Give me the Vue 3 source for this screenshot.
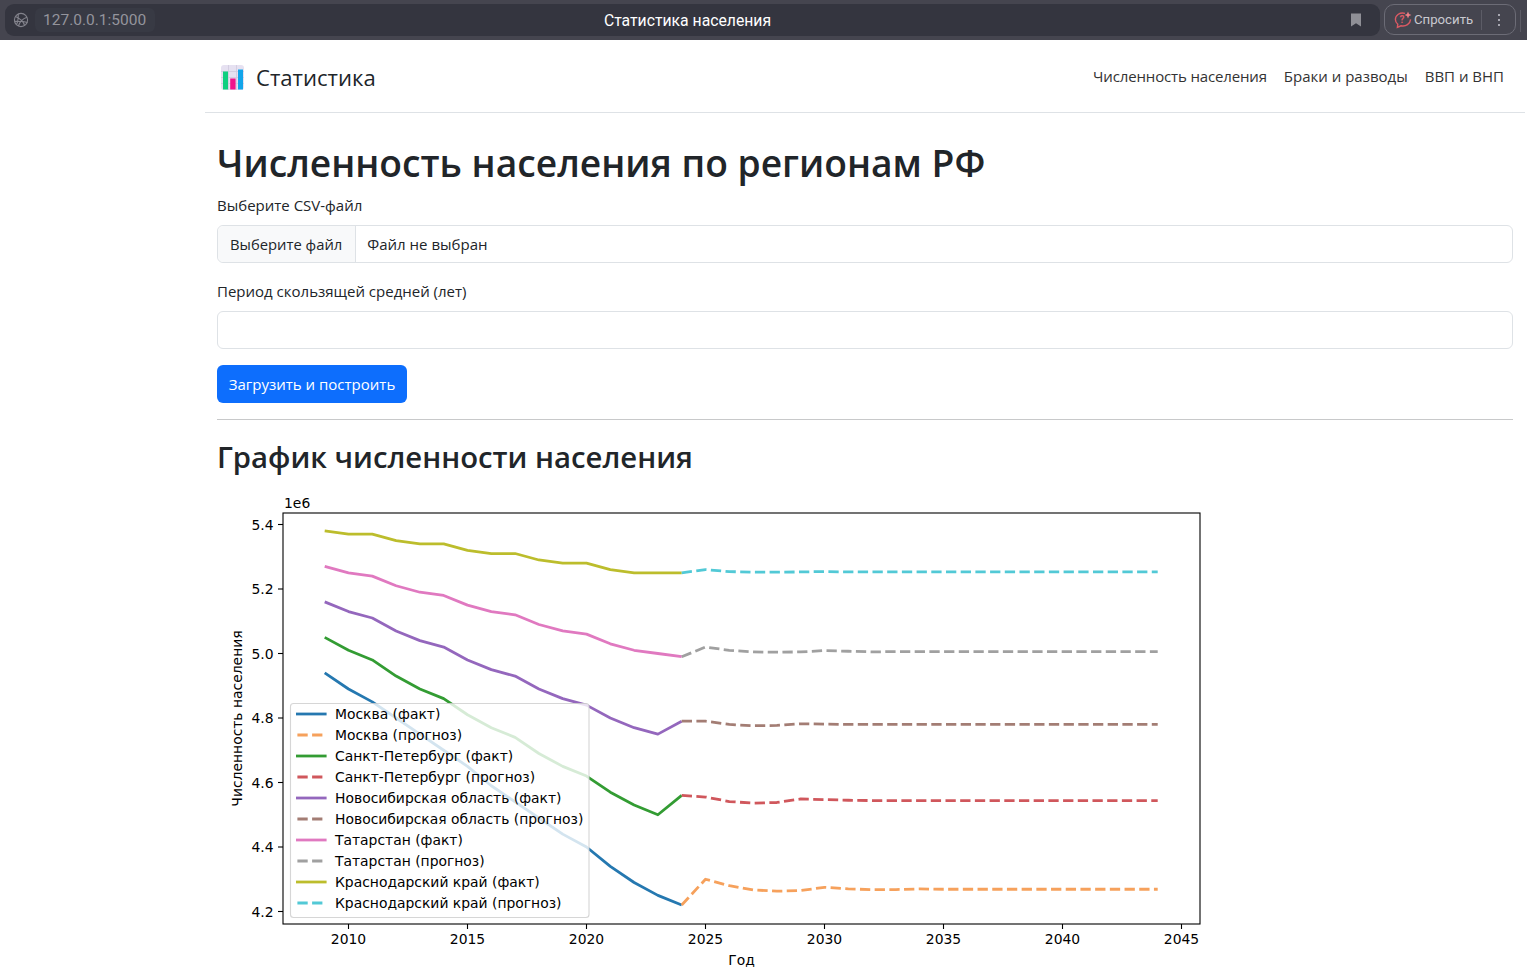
<template>
  <div class="browser-bar">
    <div class="address">
      <svg class="globe" width="16" height="16" viewBox="0 0 16 16" fill="none" stroke="#83838c" stroke-width="1.1">
        <circle cx="8" cy="8" r="6.6" />
        <path d="M2.5 4.6 C6 6.2 10.5 9.6 11.6 13.6 M5.2 2 C5.4 6 4.6 10.6 3.4 12.8 M14 5.2 C10.5 6.4 6.6 10 5.4 14 M1.6 9.4 C5.4 9.2 10.8 9.4 14.4 10.6" />
      </svg>
      <span class="url">127.0.0.1:5000</span>
      <span class="tab-title">Статистика населения</span>
      <svg class="bookmark" width="12" height="14" viewBox="0 0 12 14"><path d="M1 0.5 H11 V13.5 L6 10.2 L1 13.5 Z" fill="#8f8f96" /></svg>
    </div>
    <div class="ask">
      <svg class="ask-icon" width="18" height="18" viewBox="0 0 18 18" fill="none">
        <path d="M11 2.4 C6 1 1.4 4 1.4 8.6 C1.4 10.6 2.4 12.2 3.8 13.2 L3.4 16.4 L7 14.8 C11.8 15.8 16.2 13 16.6 8.4" stroke="#dc5a64" stroke-width="1.4" />
        <text x="5.4" y="12" class="ask-q">?</text>
        <path d="M14 0.6 L15 3 L17.4 4 L15 5 L14 7.4 L13 5 L10.6 4 L13 3 Z" fill="#f07f86" />
      </svg>
      <span class="ask-label">Спросить</span>
      <i class="ask-sep"></i>
      <span class="dots"><i></i><i></i><i></i></span>
    </div>
    <i class="bar-sep"></i>
  </div>

  <div class="page">
    <nav class="navbar">
      <a class="brand">
        <svg width="25" height="26" viewBox="0 0 25 26">
          <rect x="1" y="0" width="23" height="25" rx="3" fill="#e6e1f1" />
          <path d="M1 6.5 H24 M1 12.5 H24 M1 18.5 H24 M8.5 0 V25 M16.5 0 V25" stroke="#cfc9de" stroke-width="0.8" />
          <rect x="3" y="6.5" width="5" height="18" fill="#0ecf80" />
          <rect x="10.2" y="13.5" width="5.4" height="11" fill="#f0148c" />
          <rect x="18" y="4.5" width="5" height="20" fill="#12a5ea" />
        </svg>
        <span class="brand-name">Статистика</span>
      </a>
      <div class="nav-links">
        <a class="tight">Численность населения</a>
        <a>Браки и разводы</a>
        <a>ВВП и ВНП</a>
      </div>
    </nav>

    <main class="content">
      <h1>Численность населения по регионам РФ</h1>
      <label class="form-label">Выберите CSV-файл</label>
      <div class="file-input">
        <span class="file-btn">Выберите файл</span>
        <span class="file-name">Файл не выбран</span>
      </div>
      <label class="form-label second">Период скользящей средней (лет)</label>
      <div class="text-input"></div>
      <button class="submit">Загрузить и построить</button>
      <hr />
      <h2>График численности населения</h2>

      <svg class="chart" width="1000" height="483" viewBox="0 0 1000 483">
        <g v-for="s in series" :key="s.name">
          <polyline :points="s.factPts" fill="none" :stroke="s.fact" stroke-width="2.78" stroke-linejoin="round" />
          <polyline :points="s.forePts" fill="none" :stroke="s.fore" stroke-width="2.78" stroke-dasharray="10.3 4.4" stroke-linejoin="round" />
        </g>

        <rect :x="plot.l" :y="plot.t" :width="plot.r - plot.l" :height="plot.b - plot.t" fill="none" stroke="#000" stroke-width="1.1" />

        <g v-for="t in xTicks" :key="t.label">
          <line :x1="t.x" :x2="t.x" :y1="plot.b" :y2="plot.b + 5" stroke="#000" stroke-width="1.1" />
          <text :x="t.x" :y="plot.b + 20" text-anchor="middle" class="tick">{{ t.label }}</text>
        </g>
        <g v-for="t in yTicks" :key="t.label">
          <line :x1="plot.l - 5" :x2="plot.l" :y1="t.y" :y2="t.y" stroke="#000" stroke-width="1.1" />
          <text :x="plot.l - 9.5" :y="t.y + 5" text-anchor="end" class="tick">{{ t.label }}</text>
        </g>
        <text x="67" y="13" class="tick">1e6</text>
        <text x="524.5" y="470" text-anchor="middle" class="tick">Год</text>
        <text transform="translate(25 223.5) rotate(-90)" text-anchor="middle" class="tick">Численность населения</text>

        <rect x="73.5" y="208.5" width="298.5" height="214" rx="3" fill="#fff" fill-opacity="0.8" stroke="#ccc" stroke-opacity="0.8" stroke-width="1.1" />
        <g v-for="(row, i) in legend" :key="row.label">
          <line v-if="row.solid" x1="80.4" x2="108.2" :y1="219 + i * 21" :y2="219 + i * 21" :stroke="row.color" stroke-width="2.78" stroke-linecap="square" />
          <line v-else x1="80.4" x2="108.2" :y1="219 + i * 21" :y2="219 + i * 21" :stroke="row.color" stroke-width="2.78" stroke-dasharray="10.3 4.4" />
          <text x="118" :y="224 + i * 21" class="tick">{{ row.label }}</text>
        </g>
      </svg>
    </main>
  </div>
</template>

<script setup>
const plot = { l: 66, r: 983, t: 18, b: 429 }

const px = (year) => 131.5 + (year - 2010) * 23.8
const py = (v) => 29.5 + (5.4 - v) * 322.5

function fill(values, last) {
  const out = [...values]
  while (out.length < 21) out.push(last)
  return out
}

const raw = [
  {
    name: 'Москва', fact: '#2578b0', fore: '#f6a15c',
    values: [4.94, 4.89, 4.85, 4.8, 4.75, 4.7, 4.65, 4.59, 4.54, 4.49, 4.44, 4.4, 4.34, 4.29, 4.25, 4.22],
    forecast: fill([4.22, 4.3, 4.28, 4.267, 4.263, 4.265, 4.275, 4.27, 4.268, 4.268, 4.27], 4.269),
  },
  {
    name: 'Санкт-Петербург', fact: '#339c33', fore: '#d0575c',
    values: [5.05, 5.01, 4.98, 4.93, 4.89, 4.86, 4.81, 4.77, 4.74, 4.69, 4.65, 4.62, 4.57, 4.53, 4.5, 4.56],
    forecast: fill([4.56, 4.555, 4.541, 4.536, 4.538, 4.549, 4.547, 4.545], 4.544),
  },
  {
    name: 'Новосибирская область', fact: '#9467bd', fore: '#a37d74',
    values: [5.16, 5.13, 5.11, 5.07, 5.04, 5.02, 4.98, 4.95, 4.93, 4.89, 4.86, 4.84, 4.8, 4.77, 4.75, 4.79],
    forecast: fill([4.79, 4.79, 4.78, 4.776, 4.777, 4.782, 4.781, 4.78], 4.78),
  },
  {
    name: 'Татарстан', fact: '#e079c0', fore: '#a0a0a0',
    values: [5.27, 5.25, 5.24, 5.21, 5.19, 5.18, 5.15, 5.13, 5.12, 5.09, 5.07, 5.06, 5.03, 5.01, 5.0, 4.99],
    forecast: fill([4.99, 5.02, 5.01, 5.005, 5.004, 5.005, 5.009, 5.007, 5.005], 5.006),
  },
  {
    name: 'Краснодарский край', fact: '#bcbd2c', fore: '#52c9d6',
    values: [5.38, 5.37, 5.37, 5.35, 5.34, 5.34, 5.32, 5.31, 5.31, 5.29, 5.28, 5.28, 5.26, 5.25, 5.25, 5.25],
    forecast: fill([5.25, 5.26, 5.254, 5.252, 5.252, 5.253, 5.254], 5.253),
  },
]

const series = raw.map((s) => ({
  ...s,
  factPts: s.values.map((v, i) => `${px(2009 + i)},${py(v)}`).join(' '),
  forePts: s.forecast.map((v, i) => `${px(2024 + i)},${py(v)}`).join(' '),
}))

const legend = raw.flatMap((s) => [
  { label: `${s.name} (факт)`, color: s.fact, solid: true },
  { label: `${s.name} (прогноз)`, color: s.fore, solid: false },
])

const xTicks = [2010, 2015, 2020, 2025, 2030, 2035, 2040, 2045].map((y) => ({ label: y, x: px(y) }))
const yTicks = ['5.4', '5.2', '5.0', '4.8', '4.6', '4.4', '4.2'].map((l) => ({ label: l, y: py(Number(l)) }))
</script>

<style scoped>
.browser-bar {
  height: 40px;
  background: #45454f;
  display: flex;
  align-items: flex-start;
  padding: 4px 0 0 5px;
  box-sizing: border-box;
  font-family: Roboto, "Noto Sans", sans-serif;
}
.address {
  width: 1375px;
  height: 32px;
  background: #34353f;
  border-radius: 9px;
  display: flex;
  align-items: center;
  flex-shrink: 0;
}
.globe { margin-left: 8px; }
.url {
  margin-left: 6px;
  padding: 0 8px;
  color: #94949c;
  font-size: 15.5px;
  width: 104px;
  line-height: 24px;
  border-radius: 6px;
  background: #383a44;
}
.tab-title {
  flex: 1;
  text-align: center;
  color: #fff;
  font-size: 15.75px;
  padding-right: 130px;
}
.bookmark { margin-right: 18px; }
.ask {
  margin-left: 4px;
  width: 132px;
  height: 31px;
  box-sizing: border-box;
  border: 1px solid #6c6c76;
  border-radius: 10px;
  display: flex;
  align-items: center;
  padding-left: 9px;
  color: #c9c9d0;
  font-size: 13.2px;
}
.ask-icon { flex-shrink: 0; }
.ask-q { font-size: 10px; font-weight: 700; fill: #dc5a64; font-family: Roboto, sans-serif; }
.ask-label { margin-left: 2px; width: 67px; }
.ask-sep { width: 1px; height: 20px; background: #5c5c66; }
.dots {
  margin-left: 16px;
  display: flex;
  flex-direction: column;
  gap: 3px;
}
.dots i { width: 2px; height: 2px; background: #c9c9d0; border-radius: 50%; }
.bar-sep {
  margin: 6px 0 0 4px;
  width: 1px;
  height: 22px;
  background: #5c5c66;
}

.page {
  margin-left: 205px;
  width: 1320px;
  color: #212529;
  font-family: "Open Sans", "Noto Sans", sans-serif;
  font-size: 15px;
}
.navbar {
  height: 73px;
  box-sizing: border-box;
  border-bottom: 1px solid #dee2e6;
  display: flex;
  align-items: center;
  justify-content: space-between;
  padding: 4px 21px 0 15px;
}
.brand {
  display: flex;
  align-items: center;
  gap: 11px;
  font-size: 22.1px;
  color: #212529;
}
.brand-name { margin-top: -2px; }
.nav-links {
  display: flex;
  gap: 17px;
  margin-top: -5px;
  color: #333;
  font-size: 15px;
}
.tight { letter-spacing: -0.15px; }
.content { padding: 0 12px; }
h1 {
  margin: 27px 0 0;
  font-size: 37.2px;
  line-height: 46px;
  font-weight: 600;
}
.form-label {
  display: block;
  margin-top: 7px;
  line-height: 24px;
}
.form-label.second { margin-top: 16px; }
.file-input, .text-input {
  margin-top: 8px;
  height: 38px;
  box-sizing: border-box;
  border: 1px solid #dee2e6;
  border-radius: 6px;
  display: flex;
  align-items: center;
  background: #fff;
}
.file-btn {
  height: 100%;
  display: flex;
  align-items: center;
  padding: 0 13px 0 12px;
  background: #f8f9fa;
  border-right: 1px solid #dee2e6;
  border-radius: 6px 0 0 6px;
  font-size: 14.8px;
}
.file-name { padding-left: 11px; }
.submit {
  display: block;
  margin-top: 16px;
  height: 38px;
  width: 190px;
  border: none;
  border-radius: 6px;
  background: #0d6efd;
  color: #fff;
  font: inherit;
}
hr {
  margin: 16px 0 0;
  border: none;
  border-top: 1px solid #c8c9ca;
}
h2 {
  margin: 17px 0 0;
  font-size: 29.3px;
  line-height: 40px;
  font-weight: 600;
}
.chart {
  display: block;
  margin-top: 18px;
}
.tick {
  font-family: "DejaVu Sans", sans-serif;
  font-size: 13.9px;
  fill: #000;
}
</style>

<style>
html, body { margin: 0; background: #fff; overflow: hidden; }
</style>
